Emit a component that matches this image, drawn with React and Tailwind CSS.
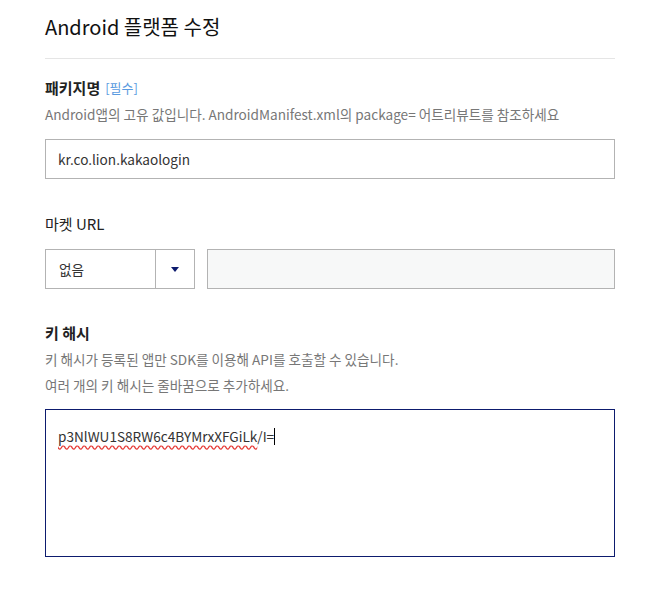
import React from 'react';

const FONT = { fontFamily: '"Noto Sans CJK KR", "Noto Sans", sans-serif' };

function Label({ children, required }) {
  return (
    <div className="flex items-center h-[22px] leading-[22px]">
      <span className="text-[15px] font-bold text-[#222]">{children}</span>
      {required && <span className="ml-[5px] text-[13px] text-[#5a9be0]">[필수]</span>}
    </div>
  );
}

export default function App() {
  return (
    <div className="w-[649px] h-[602px] bg-white" style={FONT}>
      <div className="ml-[45px] w-[570px]">
        <div className="pt-[12px] pb-[16px] border-b border-[#e5e5e5]">
          <h1 className="h-[30px] leading-[30px] text-[20px] font-normal text-[#111]">Android 플랫폼 수정</h1>
        </div>

        {/* Package name */}
        <div className="mt-[18px]">
          <Label required>패키지명</Label>
          <p className="mt-[4px] h-[22px] leading-[22px] text-[13.6px] text-[#777]">
            Android앱의 고유 값입니다. AndroidManifest.xml의 package= 어트리뷰트를 참조하세요
          </p>
          <div className="mt-[14px] h-[40px] border border-[#b3b3b3] flex items-center px-[12px] text-[13.6px] text-[#333]">
            kr.co.lion.kakaologin
          </div>
        </div>

        {/* Market URL */}
        <div className="mt-[34px]">
          <div className="h-[22px] leading-[22px] text-[15px] font-normal text-[#222]">마켓 URL</div>
          <div className="mt-[14px] flex gap-[12px]">
            <div className="w-[150px] h-[40px] border border-[#b3b3b3] flex">
              <div className="flex-1 flex items-center pl-[13px] text-[13.6px] text-[#333]">없음</div>
              <div className="w-[39px] border-l border-[#b3b3b3] flex items-center justify-center">
                <svg width="8" height="5" viewBox="0 0 8 5">
                  <path d="M0 0H8L4 5Z" fill="#0d1b6e" />
                </svg>
              </div>
            </div>
            <div className="flex-1 h-[40px] border border-[#b3b3b3] bg-[#f7f8f8]" />
          </div>
        </div>

        {/* Key hash */}
        <div className="mt-[33px]">
          <div className="h-[22px] leading-[22px] text-[15px] font-bold text-[#222]">키 해시</div>
          <div className="mt-[2px] text-[13.6px] text-[#777] leading-[26px]">
            <p>키 해시가 등록된 앱만 SDK를 이용해 API를 호출할 수 있습니다.</p>
            <p>여러 개의 키 해시는 줄바꿈으로 추가하세요.</p>
          </div>
          <div className="mt-[11px] h-[148px] border border-[#0d1b6e] pl-[12px] pt-[16px]">
            <div className="flex items-center h-[20px] text-[13.6px] text-[#333] leading-[20px]">
              <span className="underline decoration-wavy decoration-[#e53935] underline-offset-[3px]">p3NlWU1S8RW6c4BYMrxXFGiLk</span>
              <span>/I=</span>
              <span className="w-px h-[17px] bg-black" />
            </div>
          </div>
        </div>
      </div>
    </div>
  );
}
